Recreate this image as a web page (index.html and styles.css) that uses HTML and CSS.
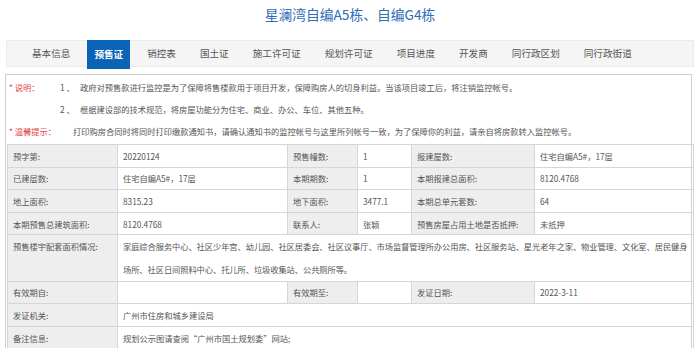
FILE: index.html
```html
<!DOCTYPE html>
<html lang="zh-CN">
<head>
<meta charset="utf-8">
<title>星澜湾自编A5栋、自编G4栋</title>
<link rel="stylesheet" href="styles.css">
</head>
<body>
<h1 class="title">星澜湾自编A5栋、自编G4栋</h1>
<nav class="tabs">
  <span class="tab">基本信息</span>
  <span class="tab active">预售证</span>
  <span class="tab">销控表</span>
  <span class="tab">国土证</span>
  <span class="tab">施工许可证</span>
  <span class="tab">规划许可证</span>
  <span class="tab">项目进度</span>
  <span class="tab">开发商</span>
  <span class="tab">同行政区划</span>
  <span class="tab">同行政街道</span>
</nav>
<div class="panel">
  <div class="notes">
    <div class="note-row">
      <span class="note-label fixed">* 说明：</span>
      <span class="note-num">1 、</span>
      <span class="note-text">政府对预售款进行监控是为了保障将售楼款用于项目开发，保障购房人的切身利益。当该项目竣工后，将注销监控帐号。</span>
    </div>
    <div class="note-row">
      <span class="note-label fixed"></span>
      <span class="note-num">2 、</span>
      <span class="note-text">根据建设部的技术规范，将房屋功能分为住宅、商业、办公、车位、其他五种。</span>
    </div>
    <div class="note-row">
      <span class="note-label">* 温馨提示：</span>
      <span class="note-text">打印购房合同时将同时打印缴款通知书，请确认通知书的监控帐号与这里所列帐号一致，为了保障你的利益，请亲自将房款转入监控帐号。</span>
    </div>
  </div>
  <table class="info">
    <colgroup>
      <col class="c1"><col class="c2"><col class="c3"><col class="c4"><col class="c5"><col class="c6">
    </colgroup>
    <tr>
      <td class="lbl">预字第:</td><td>20220124</td>
      <td class="lbl">预售幢数:</td><td>1</td>
      <td class="lbl">报建屋数:</td><td>住宅自编A5#，17层</td>
    </tr>
    <tr>
      <td class="lbl">已建层数:</td><td>住宅自编A5#，17层</td>
      <td class="lbl">本期期数:</td><td>1</td>
      <td class="lbl">本期报建总面积:</td><td>8120.4768</td>
    </tr>
    <tr>
      <td class="lbl">地上面积:</td><td>8315.23</td>
      <td class="lbl">地下面积:</td><td>3477.1</td>
      <td class="lbl">本期总单元套数:</td><td>64</td>
    </tr>
    <tr>
      <td class="lbl">本期预售总建筑面积:</td><td>8120.4768</td>
      <td class="lbl">联系人:</td><td>张颖</td>
      <td class="lbl">预售房屋占用土地是否抵押:</td><td>未抵押</td>
    </tr>
    <tr>
      <td class="lbl top">预售楼宇配套面积情况:</td>
      <td colspan="5" class="multi">家庭综合服务中心、社区少年宫、幼儿园、社区居委会、社区议事厅、市场监督管理所办公用房、社区服务站、星光老年之家、物业管理、文化室、居民健身<br>场所、社区日间照料中心、托儿所、垃圾收集站、公共厕所等。</td>
    </tr>
    <tr>
      <td class="lbl">有效期自:</td><td></td>
      <td class="lbl">有效期至:</td><td></td>
      <td class="lbl">发证日期:</td><td>2022-3-11</td>
    </tr>
    <tr>
      <td class="lbl">发证机关:</td><td colspan="5">广州市住房和城乡建设局</td>
    </tr>
    <tr>
      <td class="lbl">备注信息:</td><td colspan="5">规划公示图请查阅“广州市国土规划委”网站;</td>
    </tr>
  </table>
</div>
</body>
</html>
```
FILE: styles.css
```css
html, body {
  margin: 0;
  padding: 0;
  background: #ffffff;
}

body {
  font-family: "Noto Sans CJK SC", "Microsoft YaHei", "Noto Sans", sans-serif;
  color: #555555;
}

.title {
  margin: 0 0 11px;
  height: 29px;
  line-height: 29px;
  text-align: center;
  font-size: 13.75px;
  font-weight: normal;
  color: #2f6db6;
}

.tabs {
  box-sizing: border-box;
  display: flex;
  align-items: flex-start;
  gap: 10px;
  height: 27px;
  margin: 0 6px;
  padding-left: 18px;
  background: #f5f5f5;
  border: 1px solid #ebebeb;
}

.tab {
  padding: 0 7px;
  height: 25px;
  line-height: 25px;
  font-size: 9.6px;
  color: #555555;
  white-space: nowrap;
}

.tab.active {
  height: 29px;
  line-height: 29px;
  margin-top: -1px;
  background: #0b63b6;
  color: #ffffff;
  font-weight: bold;
}

.panel {
  margin: 7px 8px 0 5px;
  border: 1px solid #cfcfcf;
  border-bottom: none;
  padding: 0 0 0 1px;
}

.notes {
  padding: 1px 0 0 2px;
  font-size: 8.25px;
}

.note-row {
  display: flex;
  height: 22px;
  line-height: 22px;
  white-space: nowrap;
}

.note-label {
  color: #e64340;
  margin-right: 17px;
}

.note-label.fixed {
  width: 51px;
  margin-right: 0;
}

.note-num {
  width: 20px;
}

.info {
  width: 686px;
  margin-top: 2px;
  table-layout: fixed;
  border-collapse: collapse;
  font-size: 8.25px;
}

.c1 { width: 110px; }
.c2 { width: 170px; }
.c3 { width: 70px; }
.c4 { width: 54px; }
.c5 { width: 123px; }
.c6 { width: 159px; }

.info td {
  height: 21.6px;
  padding: 0 5px;
  border: 1px solid #d6d6d6;
  line-height: 12px;
  white-space: nowrap;
  overflow: visible;
}

.info td.lbl {
  background: #eeeeee;
}

.info td.top {
  vertical-align: top;
  padding-top: 5px;
}

.info td.multi {
  line-height: 22.6px;
  padding-top: 0;
  padding-bottom: 0;
  letter-spacing: -0.07px;
}
```
